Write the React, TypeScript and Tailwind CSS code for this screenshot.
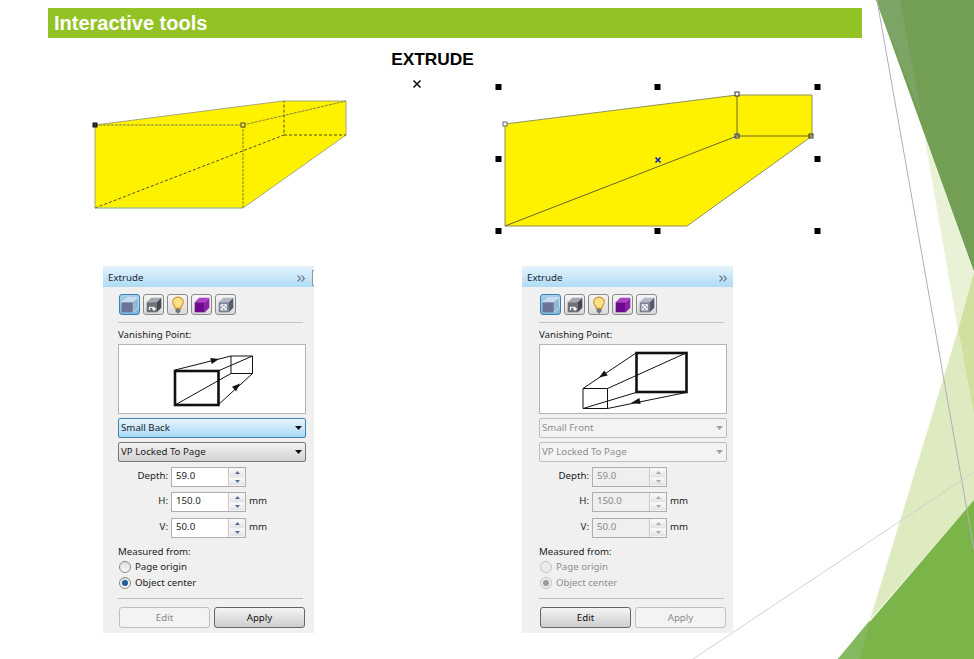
import React from "react";

const UI = "font-['Noto_Sans',sans-serif] text-[9.7px] text-[#222]";

function Caret({ off }: { off?: boolean }) {
  return (
    <svg width="7" height="4" viewBox="0 0 7 4" className="shrink-0">
      <path d="M0 0H7L3.5 4Z" fill={off ? "#a0a0a0" : "#111"} />
    </svg>
  );
}

function Select({ label, kind }: { label: string; kind: "focus" | "normal" | "off" }) {
  const cls =
    kind === "focus"
      ? "border-[#3f82b3] bg-gradient-to-b from-[#e6f5fd] to-[#a9d9f6] text-[#222]"
      : kind === "normal"
        ? "border-[#777] bg-gradient-to-b from-[#f3f3f3] to-[#d2d2d2] text-[#222]"
        : "border-[#bdbdbd] bg-[#f3f3f3] text-[#8f8f8f]";
  return (
    <div className={`flex h-[20px] w-[188px] items-center justify-between rounded-[2px] border pl-[2px] pr-[3px] ${cls}`}>
      <span className="pt-px">{label}</span>
      <Caret off={kind === "off"} />
    </div>
  );
}

function Spinner({ label, value, unit, off, mt }: { label: string; value: string; unit?: boolean; off?: boolean; mt: string }) {
  return (
    <div className={`flex h-[20px] items-center ${mt}`}>
      <span className="w-[50px] pb-[2px] text-right">{label}</span>
      <div className={`ml-[3px] flex h-[20px] w-[75px] border border-[#aeaeae] ${off ? "bg-[#efefef] text-[#8a8a8a]" : "bg-white text-[#222]"}`}>
        <span className="flex flex-1 items-center pb-[2px] pl-[4px]">{value}</span>
        <div className="flex w-[17px] flex-col gap-px border-l border-[#c8c8c8] bg-[#f3f3f3] p-px">
          <div className="flex flex-1 items-center justify-center bg-gradient-to-b from-[#fafafa] to-[#e2e2e2]">
            <svg width="5" height="3" viewBox="0 0 5 3"><path d="M0 3H5L2.5 0Z" fill={off ? "#aaa" : "#52708c"} /></svg>
          </div>
          <div className="flex flex-1 items-center justify-center bg-gradient-to-b from-[#fafafa] to-[#e2e2e2]">
            <svg width="5" height="3" viewBox="0 0 5 3"><path d="M0 0H5L2.5 3Z" fill={off ? "#aaa" : "#52708c"} /></svg>
          </div>
        </div>
      </div>
      {unit && <span className="ml-[3px] pb-[1px] text-[#222]">mm</span>}
    </div>
  );
}

function Radio({ label, on, off }: { label: string; on?: boolean; off?: boolean }) {
  return (
    <div className={`flex h-[16px] items-center pl-[1px] ${off ? "text-[#8f8f8f]" : "text-[#222]"}`}>
      <span className={`flex h-[12px] w-[12px] items-center justify-center rounded-full border ${off ? "border-[#c4c4c4] bg-[#ececec]" : "border-[#8c8c8c] bg-gradient-to-b from-[#dedede] to-[#fafafa]"}`}>
        {on && <span className={`h-[6px] w-[6px] rounded-full ${off ? "bg-[#9a9a9a]" : "bg-[#1f5f9e]"}`} />}
      </span>
      <span className="ml-[4px] pt-px">{label}</span>
    </div>
  );
}

function Btn({ label, enabled }: { label: string; enabled?: boolean }) {
  return (
    <div className={`flex h-[21px] w-[91px] items-center justify-center rounded-[3px] border pt-px ${enabled ? "border-[#666] bg-gradient-to-b from-[#f4f4f4] to-[#cecece] text-[#111]" : "border-[#bcc0c2] bg-[#f3f3f3] text-[#8a8a8a]"}`}>
      {label}
    </div>
  );
}

function ToolIcon({ children, active }: { children: React.ReactNode; active?: boolean }) {
  return (
    <div className={`flex h-[21px] w-[21px] items-center justify-center rounded-[3px] border ${active ? "border-[#3b7fae] bg-gradient-to-b from-[#a5d0ec] to-[#7fb6da]" : "border-[#8a8a8a] bg-gradient-to-b from-[#f6f6f6] to-[#d9d9d9]"}`}>
      {children}
    </div>
  );
}

function Toolbar() {
  return (
    <div className="mt-[7px] ml-px flex h-[21px] gap-[3px]">
      <ToolIcon active>
        <svg width="18" height="18" viewBox="0.5 0.5 16 16">
          <path d="M1 6H11V15H1Z" fill="#6d7396" />
          <path d="M1 6L6 2H16L11 6Z" fill="#c6dcec" />
          <path d="M11 6L16 2V11L11 15Z" fill="#93b8d4" />
          <path d="M1 6L6 2H16V11L11 15" fill="none" stroke="#e8f2f8" strokeWidth="0.8" strokeDasharray="1.5 1" />
        </svg>
      </ToolIcon>
      <ToolIcon>
        <svg width="18" height="18" viewBox="0.5 0.5 16 16">
          <path d="M2 6H11V15H2Z" fill="#6d6f78" />
          <path d="M2 6L6 2H15L11 6Z" fill="#a5a7b0" />
          <path d="M11 6L15 2V11L11 15Z" fill="#45464f" />
          <path d="M4.5 13V10.5H8.5V12.5M7 11.5L8.5 13L10 11.5" fill="none" stroke="#fff" strokeWidth="1.1" />
        </svg>
      </ToolIcon>
      <ToolIcon>
        <svg width="18" height="18" viewBox="0.5 0.5 16 16">
          <path d="M8.5 1.5C5.5 1.5 3.8 3.6 3.8 6C3.8 8.2 5.8 9 6 11.5H11C11.2 9 13.2 8.2 13.2 6C13.2 3.6 11.5 1.5 8.5 1.5Z" fill="#fbe08a" stroke="#c98f22" strokeWidth="0.9" />
          <path d="M6.4 12H10.6V15H9.6L9 16H8L7.4 15H6.4Z" fill="#6f7380" />
        </svg>
      </ToolIcon>
      <ToolIcon>
        <svg width="18" height="18" viewBox="0.5 0.5 16 16">
          <path d="M2 6H11V15H2Z" fill="#6c0a8c" />
          <path d="M2 6L6 2H15L11 6Z" fill="#b040c8" />
          <path d="M11 6L15 2V11L11 15Z" fill="#8f1fa8" />
        </svg>
      </ToolIcon>
      <ToolIcon>
        <svg width="18" height="18" viewBox="0.5 0.5 16 16">
          <path d="M2 6H11V15H2Z" fill="#7b8094" />
          <path d="M2 6L6 2H15L11 6Z" fill="#b4b8c6" />
          <path d="M11 6L15 2V11L11 15Z" fill="#565a6c" />
          <path d="M4 8L9 13M9 8L4 13" stroke="#fff" strokeWidth="1.1" />
          <path d="M4 8H9V13H4Z" fill="none" stroke="#e6e8f0" strokeWidth="0.8" />
        </svg>
      </ToolIcon>
    </div>
  );
}

function DiagramBack() {
  return (
    <svg width="186" height="68" viewBox="119 345 186 68" className="block">
      <g fill="none" stroke="#111" strokeWidth="1">
        <path d="M231 356H252.5V373.5H231Z" />
        <path d="M175 370L231 356M218 371L252.5 356M218 405L252.500 373.5M175 405L231 373.5" />
        <rect x="175" y="371" width="43.5" height="34" strokeWidth="2.6" />
      </g>
      <path d="M219 359L211.700 363.900L210.300 358.100Z" fill="#111" />
      <path d="M240 383.500L236 391.200L232 386.800Z" fill="#111" />
    </svg>
  );
}

function DiagramFront() {
  return (
    <svg width="186" height="68" viewBox="540 345 186 68" className="block">
      <g fill="none" stroke="#111" strokeWidth="1">
        <path d="M583 388.5H607.5V408.5H583Z" />
        <path d="M636 353L583 388.5M686 353L607.5 388.5M686 392.5L607.5 408.5M636 392.5L583 408.5" />
        <rect x="636.5" y="353" width="50" height="39" strokeWidth="2.6" />
      </g>
      <path d="M599 377.500L607.700 375.500L604.300 370.500Z" fill="#111" />
      <path d="M631 403L640.600 404L639.400 398Z" fill="#111" />
    </svg>
  );
}

function Chevrons() {
  return (
    <svg width="8" height="7" viewBox="0 0 8 7" className="shrink-0">
      <path d="M0.500 0.500L3.500 3.500L0.500 6.500M4.500 0.500L7.500 3.500L4.500 6.500" fill="none" stroke="#6a7680" strokeWidth="1.1" />
    </svg>
  );
}

function Panel({ first }: { first?: boolean }) {
  const off = !first;
  return (
    <div className={`flex h-[367px] w-[211px] flex-col bg-[#f0f0f0] ${UI}`}>
      <div className="flex h-[21px] shrink-0 items-center justify-between bg-gradient-to-b from-[#e6f4fc] to-[#aedbf6] pl-[5px] pt-[3px]">
        <span className="text-[#1c2a33]">Extrude</span>
        <div className="flex items-center">
          <span className={first ? "mr-[7px]" : "mr-[6px]"}><Chevrons /></span>
          {first && <span className="h-[16px] w-[2px] rounded-l-[1px] border border-r-0 border-[#8a98a4] bg-white" />}
        </div>
      </div>
      <div className={first ? "pl-[15px]" : "pl-[17px]"}>
        <Toolbar />
        <div className="mt-[7px] h-px w-[185px] bg-[#c4c4c4]" />
        <div className="mt-[5px] mb-[-1px] h-[14px] leading-[14px]">Vanishing Point:</div>
        <div className="mt-[3px] h-[70px] w-[188px] border border-[#b4b4b4] bg-white">
          {first ? <DiagramBack /> : <DiagramFront />}
        </div>
        <div className="mt-[4px]">
          <Select label={first ? "Small Back" : "Small Front"} kind={first ? "focus" : "off"} />
        </div>
        <div className="mt-[4px]">
          <Select label="VP Locked To Page" kind={first ? "normal" : "off"} />
        </div>
        <Spinner mt="mt-[5px]" label="Depth:" value="59.0" off={off} />
        <Spinner mt="mt-[5px]" label="H:" value="150.0" unit off={off} />
        <Spinner mt="mt-[6px]" label="V:" value="50.0" unit off={off} />
        <div className="mt-[7px] mb-[-1px] h-[14px] leading-[14px]">Measured from:</div>
        <div className="mt-px">
          <Radio label="Page origin" off={off} />
          <Radio label="Object center" on off={off} />
        </div>
        <div className="mt-[7px] h-px w-[185px] bg-[#bcbcbc]" />
        <div className="mt-[8px] ml-px flex gap-[4px]">
          <Btn label="Edit" enabled={off} />
          <Btn label="Apply" enabled={first} />
        </div>
      </div>
    </div>
  );
}

function Node({ x, y, c = "#3a3a8c", fill = "none" }: { x: number; y: number; c?: string; fill?: string }) {
  return <rect x={x - 2} y={y - 2} width="4" height="4" fill={fill} stroke={c} strokeWidth="1" />;
}

function Handle({ x, y }: { x: number; y: number }) {
  return <rect x={x - 3} y={y - 3} width="6" height="6" fill="#000" />;
}

export default function App() {
  return (
    <div className="relative h-[659px] w-[974px] overflow-hidden bg-white">
      <svg className="absolute inset-0" width="974" height="659" viewBox="0 0 974 659">
        <path d="M876 0H974V272Z" fill="#729f53" />
        <path d="M876 0H900L922 118Z" fill="#7ca565" />
        <path d="M924 134L974 272L958 330Z" fill="#e9f1d6" />
        <path d="M974 272L958 330L974 417Z" fill="#d0e19f" />
        <path d="M958 330L974 417V500L870 620Z" fill="#deeac0" />
        <path d="M974 500L838 659H974Z" fill="#7bb54a" />
        <path d="M870 620L838 659H860Z" fill="#85b95f" />
        <path d="M877 0L974 550" stroke="#b0b0b0" strokeWidth="1" fill="none" />
        <path d="M974 472L693 659" stroke="#d2d2d2" strokeWidth="1" fill="none" />
      </svg>

      <div className="relative flex flex-col">
        <div className="mt-[8px] ml-[48px] flex h-[30px] w-[814px] items-center bg-[#93c224] pl-[6px] font-['Liberation_Sans',sans-serif] text-[20px] font-bold text-white">
          Interactive tools
        </div>
        <div className="mt-[10px] h-[22px] w-[865px] text-center font-['Liberation_Sans',sans-serif] text-[17.3px] font-bold leading-[22px] text-black">
          EXTRUDE
        </div>
        <div className="flex h-[170px] items-start">
          <svg width="270" height="120" viewBox="85 95 270 120" className="ml-[85px] mt-[25px] shrink-0">
            <path d="M95 125L283 101H346V135L243 208H95Z" fill="#fff200" stroke="#a8a878" strokeWidth="1" />
            <g fill="none" stroke="#3a3a20" strokeWidth="0.9" strokeDasharray="3 2">
              <path d="M95 208L284 135V101M284 135H346" />
            </g>
            <g fill="none" stroke="#77744a" strokeWidth="0.9" strokeDasharray="3 1">
              <path d="M243 125L346 101M95 125H243V208" />
            </g>
            <path d="M95 208H243" stroke="#6fd0d0" strokeWidth="0.8" strokeDasharray="2 2" fill="none" />
            <Node x={95} y={125} c="#111" fill="#333" />
            <Node x={243} y={125} c="#445" fill="#fff200" />
          </svg>
          <svg width="10" height="10" viewBox="0 0 10 10" className="ml-[57px] mt-[9px] shrink-0">
            <path d="M1.500 1.500L8.500 8.500M8.500 1.500L1.500 8.500" stroke="#111" strokeWidth="1.6" />
          </svg>
          <svg width="340" height="160" viewBox="490 80 340 160" className="ml-[68px] mt-[10px] shrink-0">
            <path d="M505 124L737 95H812V136L687 226H505Z" fill="#fff200" stroke="#8f8f5a" strokeWidth="1" />
            <path d="M737 95V136H812M505 226L737 136" fill="none" stroke="#6a6428" strokeWidth="1" />
            <Node x={505} y={124} c="#666" fill="#fff" />
            <Node x={737} y={94} c="#333" fill="#fff" />
            <Node x={737} y={136} c="#2030d0" />
            <Node x={811} y={136} c="#333" />
            <path d="M655.500 157.500L660.500 162.500M660.500 157.500L655.500 162.500" stroke="#1020d0" strokeWidth="1.600" />
            {[498.5, 657.5, 817.5].map((x) =>
              [87, 159, 231].map((y) => (x === 657.5 && y === 159 ? null : <Handle key={`${x}-${y}`} x={x} y={y} />))
            )}
          </svg>
        </div>
        <div className="mt-[26px] ml-[103px] flex gap-[208px]">
          <Panel first />
          <Panel />
        </div>
      </div>
    </div>
  );
}
